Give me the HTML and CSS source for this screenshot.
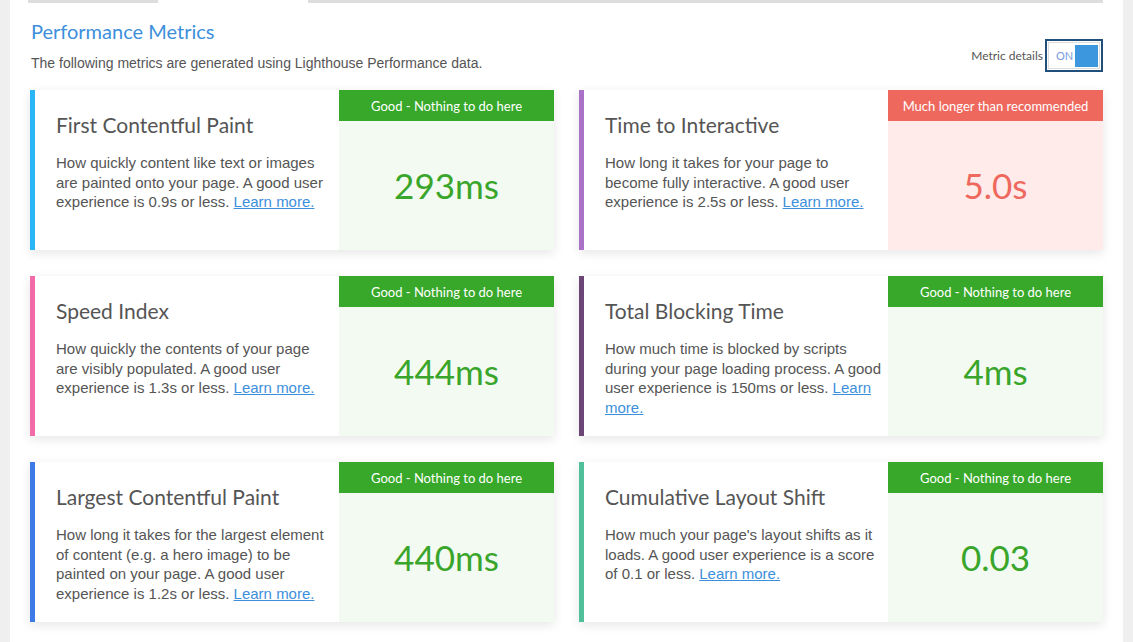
FILE: index.html
```html
<!DOCTYPE html>
<html>
<head>
<meta charset="utf-8">
<link rel="stylesheet" href="styles.css">
</head>
<body>
<div class="page">
  <div class="tabs"><span class="tab t1"></span><span class="tab-gap"></span><span class="tab t2"></span></div>
  <div class="header">
    <div class="head-left">
      <h1 class="title">Performance Metrics</h1>
      <p class="subtitle">The following metrics are generated using Lighthouse Performance data.</p>
    </div>
    <div class="toggle-wrap">
      <span class="toggle-label">Metric details</span>
      <span class="toggle"><span class="toggle-inner"><span class="on">ON</span><span class="knob"></span></span></span>
    </div>
  </div>
  <div class="grid">
    <div class="card c-fcp">
      <div class="info">
        <h2 class="card-title">First Contentful Paint</h2>
        <p class="desc">How quickly content like text or images are painted onto your page. A good user experience is 0.9s or less. <a href="#">Learn more.</a></p>
      </div>
      <div class="result good"><div class="badge">Good - Nothing to do here</div><div class="value">293ms</div></div>
    </div>
    <div class="card c-tti">
      <div class="info">
        <h2 class="card-title">Time to Interactive</h2>
        <p class="desc">How long it takes for your page to become fully interactive. A good user experience is 2.5s or less. <a href="#">Learn more.</a></p>
      </div>
      <div class="result bad"><div class="badge">Much longer than recommended</div><div class="value">5.0s</div></div>
    </div>
    <div class="card c-si">
      <div class="info">
        <h2 class="card-title">Speed Index</h2>
        <p class="desc">How quickly the contents of your page are visibly populated. A good user experience is 1.3s or less. <a href="#">Learn more.</a></p>
      </div>
      <div class="result good"><div class="badge">Good - Nothing to do here</div><div class="value">444ms</div></div>
    </div>
    <div class="card c-tbt">
      <div class="info">
        <h2 class="card-title">Total Blocking Time</h2>
        <p class="desc">How much time is blocked by scripts during your page loading process. A good user experience is 150ms or less. <a href="#">Learn more.</a></p>
      </div>
      <div class="result good"><div class="badge">Good - Nothing to do here</div><div class="value">4ms</div></div>
    </div>
    <div class="card c-lcp">
      <div class="info">
        <h2 class="card-title">Largest Contentful Paint</h2>
        <p class="desc">How long it takes for the largest element of content (e.g. a hero image) to be painted on your page. A good user experience is 1.2s or less. <a href="#">Learn more.</a></p>
      </div>
      <div class="result good"><div class="badge">Good - Nothing to do here</div><div class="value">440ms</div></div>
    </div>
    <div class="card c-cls">
      <div class="info">
        <h2 class="card-title">Cumulative Layout Shift</h2>
        <p class="desc">How much your page's layout shifts as it loads. A good user experience is a score of 0.1 or less. <a href="#">Learn more.</a></p>
      </div>
      <div class="result good"><div class="badge">Good - Nothing to do here</div><div class="value">0.03</div></div>
    </div>
  </div>
</div>
</body>
</html>
```
FILE: styles.css
```css
html, body { margin: 0; padding: 0; }
body {
  background: #efefef;
  font-family: "Liberation Sans", Arial, sans-serif;
  color: #555;
}
.page {
  margin: 0 10px;
  background: #fff;
  height: 642px;
  padding: 0 20px 0 20px;
  box-sizing: border-box;
}
.tabs { display: flex; height: 3px; margin-left: -2px; }
.tab { background: #ddd; height: 3px; }
.t1 { width: 130px; }
.tab-gap { width: 150px; }
.t2 { flex: 1; }
.header {
  display: flex;
  justify-content: space-between;
  align-items: flex-end;
  height: 87px;
}
.head-left { padding-bottom: 19px; }
.title {
  font-family: "Lato", "Noto Sans", sans-serif;
  font-weight: 400;
  font-size: 20px;
  color: #3d8fdb;
  margin: 0 0 12px 1px;
  line-height: 24px;
}
.subtitle {
  margin: 0 0 0 1px;
  font-size: 14px;
  line-height: 16px;
  color: #555;
}
.toggle-wrap {
  display: flex;
  align-items: center;
  padding-bottom: 15px;
}
.toggle-label {
  font-family: "Lato", "Noto Sans", sans-serif;
  font-size: 12px;
  color: #555;
  margin-right: 2px;
  margin-bottom: 4px;
}
.toggle {
  display: block;
  border: 2px solid #1f4f7a;
  padding: 1px;
  background: #fff;
  margin-bottom: 3px;
}
.toggle-inner {
  display: flex;
  align-items: center;
  width: 52px;
  height: 27px;
  box-sizing: border-box;
  border: 1px solid #ddd;
  padding: 1px;
}
.on {
  font-family: "Lato", "Noto Sans", sans-serif;
  font-size: 11px;
  color: #7a9be0;
  flex: 1;
  padding-left: 6px;
}
.knob {
  width: 23px;
  height: 22px;
  background: #3c97df;
}
.grid {
  display: grid;
  grid-template-columns: 1fr 1fr;
  column-gap: 25px;
  row-gap: 26px;
}
.card {
  display: flex;
  height: 160px;
  border-left: 5px solid #29b6f6;
  background: #fff;
  box-shadow: 0 3px 10px rgba(0,0,0,0.10);
}
.c-tti { border-left-color: #a971c7; }
.c-si { border-left-color: #f06ba8; }
.c-tbt { border-left-color: #6b4576; }
.c-lcp { border-left-color: #3f7be6; }
.c-cls { border-left-color: #50c09a; }
.info {
  flex: 1;
  padding: 22px 5px 0 21px;
}
.card-title {
  font-family: "Lato", "Noto Sans", sans-serif;
  font-weight: 400;
  font-size: 21px;
  line-height: 26px;
  color: #555;
  margin: 0 0 15px 0;
}
.desc {
  margin: 0;
  font-size: 15px;
  line-height: 19.5px;
  color: #555;
}
.desc a { color: #3d8fdb; text-decoration: underline; }
.result {
  width: 215px;
  display: flex;
  flex-direction: column;
}
.badge {
  height: 31px;
  line-height: 32px;
  text-align: center;
  color: #fff;
  font-family: "Lato", "Noto Sans", sans-serif;
  font-size: 13px;
}
.value {
  flex: 1;
  display: flex;
  align-items: center;
  justify-content: center;
  font-family: "Lato", "Noto Sans", sans-serif;
  font-size: 35px;
  padding-bottom: 2px;
}
.good .badge { background: #37a829; }
.good { background: #f3faf1; }
.good .value { color: #3aa52b; }
.bad .badge { background: #ee685d; }
.bad { background: #feebea; }
.bad .value { color: #ee685d; }
```
